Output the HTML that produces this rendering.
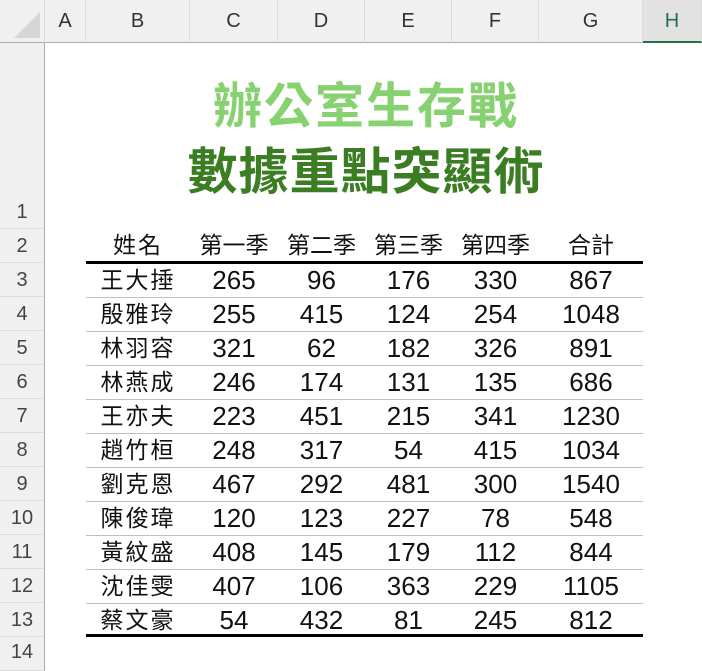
<!DOCTYPE html>
<html><head><meta charset="utf-8"><style>
*{margin:0;padding:0;box-sizing:border-box}
body{width:702px;height:660px;overflow:hidden;background:#fff;position:relative;font-family:"Liberation Sans","Noto Sans CJK TC",sans-serif}
.ch{position:absolute;top:0;height:43px;background:#f0f0f0;border-bottom:1px solid #ababab;border-right:1px solid #dcdcdc;color:#333;font-size:20px;text-align:center;line-height:43px;padding-top:0}
.rh{position:absolute;left:0;width:45px;background:#f0f0f0;border-right:1px solid #ababab;border-bottom:1px solid #dcdcdc;color:#444;font-size:20px;text-align:center}
.c{position:absolute;text-align:center;font-size:26px;color:#111;height:34px;line-height:34px}
.n{font-size:23px}
.line{position:absolute;left:86px;width:557px}
</style></head><body>
<div style="position:absolute;left:0;top:0;width:702px;height:8px;background:#e8e8e8"></div>
<div class="ch" style="left:0;width:45px;"><div style="position:absolute;left:14px;top:12px;width:0;height:0;border-left:26px solid transparent;border-bottom:26px solid #d6d6d6"></div></div>
<div class="ch" style="left:45px;width:41px">A</div>
<div class="ch" style="left:86px;width:104px">B</div>
<div class="ch" style="left:190px;width:88px">C</div>
<div class="ch" style="left:278px;width:87px">D</div>
<div class="ch" style="left:365px;width:87px">E</div>
<div class="ch" style="left:452px;width:87px">F</div>
<div class="ch" style="left:539px;width:104px">G</div>
<div class="ch" style="left:643px;width:59px;background:#e2e2e2;border-bottom:2px solid #217346;color:#217346">H</div>
<div class="rh" style="top:43px;height:153px;border-bottom:none"></div>
<div class="rh" style="top:196px;height:33px;line-height:33px;padding-top:0">1</div>
<div class="rh" style="top:229px;height:34px;line-height:34px">2</div>
<div class="rh" style="top:263px;height:34px;line-height:34px">3</div>
<div class="rh" style="top:297px;height:34px;line-height:34px">4</div>
<div class="rh" style="top:331px;height:34px;line-height:34px">5</div>
<div class="rh" style="top:365px;height:34px;line-height:34px">6</div>
<div class="rh" style="top:399px;height:34px;line-height:34px">7</div>
<div class="rh" style="top:433px;height:34px;line-height:34px">8</div>
<div class="rh" style="top:467px;height:34px;line-height:34px">9</div>
<div class="rh" style="top:501px;height:34px;line-height:34px">10</div>
<div class="rh" style="top:535px;height:34px;line-height:34px">11</div>
<div class="rh" style="top:569px;height:34px;line-height:34px">12</div>
<div class="rh" style="top:603px;height:34px;line-height:34px">13</div>
<div class="rh" style="top:637px;height:34px;line-height:30px">14</div>

<div style="position:absolute;left:36px;width:660px;top:70px;text-align:center;font-size:49px;font-weight:bold;color:#86d170;line-height:66px;letter-spacing:2px;font-family:'Noto Sans CJK TC',sans-serif">辦公室生存戰</div>
<div style="position:absolute;left:36px;width:660px;top:134px;text-align:center;font-size:50px;font-weight:bold;color:#3b7d23;line-height:68px;letter-spacing:1px;font-family:'Noto Sans CJK TC',sans-serif">數據重點突顯術</div>

<div class="line" style="top:261px;height:3px;background:#000"></div>
<div class="line" style="top:634px;height:3px;background:#000"></div>
<div class="line" style="top:297px;height:1px;background:#c0c0c0"></div>
<div class="line" style="top:331px;height:1px;background:#c0c0c0"></div>
<div class="line" style="top:365px;height:1px;background:#c0c0c0"></div>
<div class="line" style="top:399px;height:1px;background:#c0c0c0"></div>
<div class="line" style="top:433px;height:1px;background:#c0c0c0"></div>
<div class="line" style="top:467px;height:1px;background:#c0c0c0"></div>
<div class="line" style="top:501px;height:1px;background:#c0c0c0"></div>
<div class="line" style="top:535px;height:1px;background:#c0c0c0"></div>
<div class="line" style="top:569px;height:1px;background:#c0c0c0"></div>
<div class="line" style="top:603px;height:1px;background:#c0c0c0"></div>

<div id="t"></div>
<script>
var cols=[[86,104],[190,88],[278,87],[365,87],[452,87],[539,104]];
var rows=[["姓名","第一季","第二季","第三季","第四季","合計"],
["王大捶",265,96,176,330,867],["殷雅玲",255,415,124,254,1048],["林羽容",321,62,182,326,891],["林燕成",246,174,131,135,686],["王亦夫",223,451,215,341,1230],["趙竹桓",248,317,54,415,1034],["劉克恩",467,292,481,300,1540],["陳俊瑋",120,123,227,78,548],["黃紋盛",408,145,179,112,844],["沈佳雯",407,106,363,229,1105],["蔡文豪",54,432,81,245,812]];
var h="";
rows.forEach(function(r,i){var top=i==0?228:263+(i-1)*34;
r.forEach(function(v,j){var cls=(i==0||j==0)?"c n":"c";var ls=(j==0)?"letter-spacing:2px;":(i==0?"letter-spacing:0;":"");
h+='<div class="'+cls+'" style="'+ls+'left:'+cols[j][0]+'px;width:'+cols[j][1]+'px;top:'+top+'px">'+v+'</div>';});});
document.getElementById("t").innerHTML=h;
</script>
</body></html>
